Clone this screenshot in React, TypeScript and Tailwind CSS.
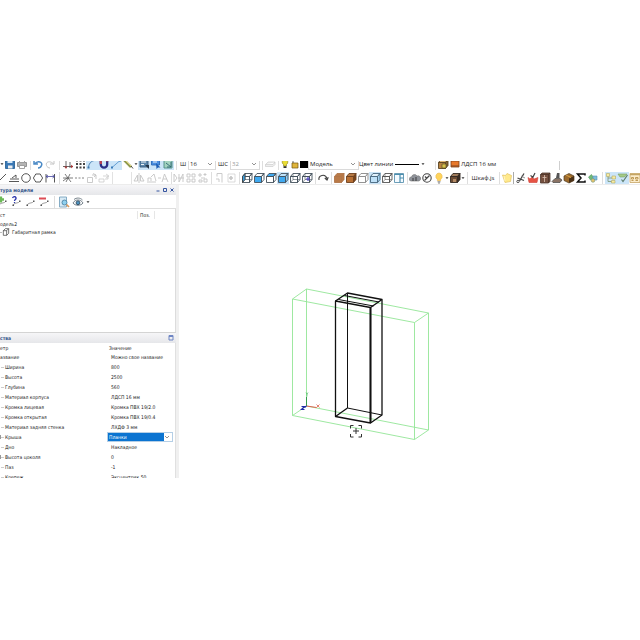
import React from "react";

type IconProps = { children: React.ReactNode; label: string; active?: boolean; muted?: boolean };

const Tool: React.FC<IconProps> = ({ children, label, active, muted }) => (
  <button
    type="button"
    aria-label={label}
    className={`flex h-3 w-3 shrink-0 items-center justify-center ${active ? "bg-[#cce5f8]" : ""} ${muted ? "opacity-30" : ""}`}
  >
    <svg viewBox="0 0 12 12" className="h-3 w-3" fill="none" stroke="#444" strokeWidth=".9">
      {children}
    </svg>
  </button>
);

const Sep = ({ wide }: { wide?: boolean }) => (
  <span className={`flex h-3 shrink-0 justify-center ${wide ? "w-1.5" : "w-1"}`}>
    <span className="h-full w-px bg-[#dedede]" />
  </span>
);

const Caret = () => (
  <svg viewBox="0 0 4 4" className="h-1 w-1 shrink-0" fill="#333">
    <path d="M.5 1.2h3L2 3z" />
  </svg>
);

type CubeProps = { front?: string; top?: string; side?: string; line?: string; through?: boolean };

// Small isometric box used by most of the view buttons
const Cube = ({ front = "none", top = "none", side = "none", line = "#44515c", through }: CubeProps) => (
  <g stroke={line} strokeWidth=".9" strokeLinejoin="round">
    <path d="M1.500 4.500 4 1.500h7L8.500 4.500z" fill={top} />
    <path d="M8.500 4.500 11 1.500v6L8.500 10.500z" fill={side} />
    <path d="M1.500 4.500h7v6h-7z" fill={front} />
    {through && <path d="M4 1.500v6h7M4 7.500l-2.500 3" strokeWidth=".6" />}
  </g>
);

const Chevron = () => (
  <svg viewBox="0 0 6 6" className="pointer-events-none absolute right-0.5 top-1/2 h-1.5 w-1.5 -translate-y-1/2" fill="none" stroke="#777" strokeWidth=".8">
    <path d="m1 2 2 2 2-2" />
  </svg>
);

type ComboProps = { id: string; value: string; className: string; muted?: boolean };

const Combo = ({ id, value, className, muted }: ComboProps) => (
  <span className={`relative block h-3 shrink-0 border border-[#dadada] bg-white ${className}`}>
    <select
      id={id}
      aria-label={id}
      defaultValue={value}
      className={`block h-full w-full appearance-none bg-transparent pl-px leading-[10px] outline-none ${muted ? "text-[#999]" : ""}`}
    >
      <option>{value}</option>
    </select>
    <Chevron />
  </span>
);

const MainToolbar = () => (
  <div className="-mt-1 flex h-3.5 items-center overflow-hidden whitespace-nowrap">
    <Caret />
    <Tool label="Сохранить">
      <path d="M1.500 1.500h9v9h-9z" fill="#3a78b5" stroke="#2b6599" />
      <path d="M3.500 1.500h5V5h-5z" fill="#d7e8f6" stroke="none" />
      <path d="M4 7.500h4.500v3H4z" fill="#eee" stroke="none" />
    </Tool>
    <Tool label="Печать">
      <path d="M1.500 4.500h9v4h-9z" fill="#b5b5b5" stroke="#8c8c8c" />
      <path d="M3.500 7.500h5v3h-5zM3.500 1.500h5v3h-5z" fill="#fff" stroke="#999" />
    </Tool>
    <Sep />
    <Tool label="Отменить">
      <path d="M2 2v4h4M2.500 6C6 2 11 4 9.500 7.500 9 9 7.500 10 6 10" stroke="#4b8ac6" strokeWidth="1.500" />
    </Tool>
    <Tool label="Вернуть" muted>
      <path d="M10 2v4H6M9.500 6C6 2 1 4 2.500 7.500 3 9 4.500 10 6 10" strokeWidth="1" />
    </Tool>
    <Sep wide />
    <Tool label="Оси">
      <path d="M4 1v9M1 8.500h10M8 4v6" strokeWidth=".8" />
      <path d="m2.500 8.500 1.500 2 1-2M9 7l2 1.500-2 1.500" fill="#a33" stroke="#a33" strokeWidth=".5" />
    </Tool>
    <Tool label="Сетка">
      <path d="M2 2.500h9M2 6h9M2 9.500h9" strokeWidth="2" strokeDasharray="2 1.500" />
    </Tool>
    <Tool label="Привязка к линии" active>
      <path d="M2.500 10c0-4 2-7 7.500-8" stroke="#3f78ad" />
      <path d="M1.500 8.500h2v2h-2zM9 1h2v2H9z" fill="#3f78ad" stroke="none" />
    </Tool>
    <Tool label="Магнит" active>
      <path d="M2.800 1v5.500a3.200 3.200 0 0 0 6.400 0V1" stroke="#2b2f86" strokeWidth="2.300" />
      <path d="M2.800 1v5M9.200 1v2.500" stroke="#b9404f" strokeWidth="2.300" />
    </Tool>
    <Tool label="Отрезок" active>
      <path d="m2 9.500 8-7" stroke="#5a97cf" />
      <path d="M1 8.500h2v2H1zM9 1.500h2v2H9z" fill="#3b7cba" stroke="none" />
    </Tool>
    <Tool label="Карандаш">
      <path d="m2 2 7 7" stroke="#8f9a50" strokeWidth="2.500" />
      <path d="m3 2 7 7" stroke="#eadb82" />
      <path d="m9 8 2 2.500" stroke="#333" />
    </Tool>
    <Caret />
    <Tool label="Вид слева" active>
      <path d="M2 2h8v7H2z" fill="#5b87ab" stroke="#33587a" />
      <path d="M3 4h5M3 6.500h3" stroke="#fff" />
      <path d="m7 7 4 4V7z" fill="#234" stroke="none" />
    </Tool>
    <Tool label="Вид сверху" active>
      <path d="M1.500 2h8v5h-8z" fill="#4a8fe0" stroke="#2c6ab8" />
      <path d="M3 4h4" stroke="#fff" />
      <path d="m6 5 4.500 4.500H8l-1.500 1.500z" fill="#1d5fb5" stroke="none" />
    </Tool>
    <Tool label="Вид справа" active>
      <path d="M2 2h8v8H2z" fill="#a3d3c0" stroke="#4a8a83" />
      <path d="m4 5 5 4M5 9h4V4" stroke="#2d6472" />
    </Tool>
    <Sep />
    <label htmlFor="width" className="w-2.5 shrink-0 text-center">Ш</label>
    <Combo id="width" value="16" className="w-7" />
    <label htmlFor="gap" className="w-3.5 shrink-0 text-center">ШС</label>
    <Combo id="gap" value="32" className="w-7.5" muted />
    <Sep />
    <Tool label="Слои" muted>
      <path d="M1.500 6.500 4 4h7L9 6.500zM1.500 6.500v2h7.500l2-2V4" fill="#ccc" strokeWidth=".6" />
    </Tool>
    <Sep />
    <svg viewBox="0 0 10 12" className="h-3 w-2.5 shrink-0">
      <path d="M5 1a3 3 0 0 0-1.500 5.500V8h3V6.500A3 3 0 0 0 5 1" fill="#e9dc34" stroke="#888026" strokeWidth=".6" />
      <path d="M3.500 8.200h3V10h-3z" fill="#333" />
    </svg>
    <svg viewBox="0 0 10 12" className="h-3 w-2.5 shrink-0">
      <path d="M3 5V3.500a1.800 1.800 0 0 1 3.600-.5" fill="none" stroke="#555" />
      <path d="M2 5h6v5H2z" fill="#e0b53c" stroke="#72560f" strokeWidth=".7" />
    </svg>
    <span className="h-2 w-2 shrink-0 bg-black" />
    <Combo id="model" value="Модель" className="w-[51px]" />
    <label htmlFor="line" className="w-[34px] shrink-0 text-center">Цвет линии</label>
    <button id="line" type="button" aria-label="Цвет линии" className="flex w-8 shrink-0 items-center gap-0.5">
      <span className="ml-0.5 h-px w-6 bg-black" />
      <Caret />
    </button>
    <span className="w-2" />
    <Sep />
    <Tool label="Материал">
      <Cube front="#b98443" top="#e2b877" side="#806133" line="#5a4524" />
      <path d="M5 6h4v4H5z" fill="#d9c24c" stroke="#4c4424" strokeWidth=".6" />
    </Tool>
    <svg viewBox="0 0 12 12" className="h-3 w-3 shrink-0">
      <path d="M2 3h8v6H2z" fill="#e8792c" stroke="#7e431d" strokeWidth=".8" />
      <path d="M2 8h8" stroke="#7e431d" />
    </svg>
    <span className="h-3 w-[99px] shrink-0 border-r border-[#cfcfcf] leading-3">ЛДСП 16 мм</span>
  </div>
);

const DrawToolbar = () => (
  <div className="-ml-1 flex h-3.5 items-center overflow-hidden border-b border-[#ececec] whitespace-nowrap">
    <Tool label="Линия"><path d="m2 10 8-8" /></Tool>
    <Tool label="Параллель"><path d="M1 9.500h10M2 7h9M4 6l4-3v3" /></Tool>
    <Tool label="Окружность"><circle cx="6" cy="6" r="4.300" /></Tool>
    <Tool label="Многоугольник"><path d="M3.800 2h4.400l2.400 4-2.400 4H3.800L1.400 6z" /></Tool>
    <Tool label="Размер"><path d="M2 2v8.500M10.500 2v8.500" /><path d="M2 4.500h8.500M4 3 2 4.500 4 6M8.500 3l2 1.500-2 1.500" stroke="#4848a0" strokeWidth=".8" /></Tool>
    <Sep wide />
    <Tool label="Обрезать"><path d="M1 6h10M3 2l6 8M8 2 4 10M1 9l4-3" strokeWidth=".7" /></Tool>
    <Tool label="Пунктир"><path d="M1 6h10" strokeDasharray="2 1.500" stroke="#777" /></Tool>
    <Tool label="Копировать" muted><path d="M1.500 5.500h5v5h-5zM6 3h4v4M7 1.500 10 3 8 5" /></Tool>
    <Tool label="Сдвиг" muted><path d="M1 7h5v3H1zM5 4h5v3H7M8 2l3 2-3 2" strokeWidth=".7" /></Tool>
    <span className="ml-0.5 h-3 w-5 shrink-0 border-x border-[#e2e2e2]" />
    <span className="w-px shrink-0" />
    <Tool label="Симметрия" muted><path d="M6 1v10M4.500 3 1 9h3.500zM7.500 3 11 9H7.500z" /></Tool>
    <Tool label="Поворот" muted><path d="M2 10h9M3 9V6h3v3M6 5l3-3 2 7" /></Tool>
    <Tool label="Текст" muted><path d="M1 6h3M5 10l2.500-8L11 10M6 7h4" /></Tool>
    <Sep />
    <Tool label="Зеркало" muted><path d="M1 2v8M1 2l3 4-3 4M6 2v8l4-8v8M5 6h6" /></Tool>
    <Tool label="Массив" muted><path d="M2 2h3v3H2zM7 2h3v3H7zM2 7h3v3H2zM7 7h3v3H7z" /></Tool>
    <Tool label="По кругу" muted><path d="M2 2h2v2H2zM8 1v3M6.500 2.500h3M2 8h3v2H2zM7 7h3v3H7zM4 6h4" /></Tool>
    <Sep />
    <Tool label="Деталь" muted><path d="M4 1.500h5v9M4 1.500v3M3 7h3v3" /></Tool>
    <Tool label="Сборка" muted><path d="M3 2h7v8H3z" strokeWidth=".6" /><path d="M4 6h4M6 4v4" strokeWidth="1.600" /></Tool>
    <Sep />
    <Tool label="Слева"><Cube through /><path d="M1.500 4.500 4 1.500v6l-2.500 3z" fill="#3aa0e0" /></Tool>
    <Tool label="Спереди"><Cube front="#3fa9f0" /></Tool>
    <Tool label="Сверху"><Cube top="#3fa9f0" /></Tool>
    <Tool label="Спереди с гранями" active><Cube front="#3fa9f0" side="#8fcdf5" top="#bfe2f9" /></Tool>
    <Tool label="Изометрия"><Cube through /></Tool>
    <Tool label="Произвольный вид"><Cube through /><path d="M7 5v4M5 7h4" stroke="#4b43c0" strokeWidth="1.200" /></Tool>
    <Sep />
    <Tool label="Вращать"><path d="M2 8C1 3.500 8 1 10 6.500M7.800 6l2.200 2 1.300-2.700" strokeWidth="1.100" /></Tool>
    <Sep />
    <Tool label="Текстура"><Cube front="#b97a48" top="#b97a48" side="#b97a48" line="#b0764a" /></Tool>
    <Tool label="Текстура с линиями"><Cube front="#b87034" top="#b87a45" side="#76431c" line="#6e4220" /></Tool>
    <Tool label="Без линий"><Cube front="#fff" top="#fff" side="#fff" line="#888" /></Tool>
    <Tool label="Скрытые линии" active><Cube front="#bfe1f8" top="#e2f2fc" side="#a5d3f1" line="#47667d" /></Tool>
    <Tool label="Каркас"><Cube through line="#555" /></Tool>
    <Tool label="Окна">
      <path d="M1.500 1.500h9v9h-9z" fill="#f4faff" stroke="#5b93b0" />
      <path d="M1.500 2.500h9M7 2v8.500M7 6h3.500" stroke="#4a8eae" strokeWidth="1.200" />
    </Tool>
    <Sep />
    <Tool label="Облако"><path d="M2 9a2 2 0 0 1 .5-4A3 3 0 0 1 8 4a2.600 2.600 0 0 1 2 5z" fill="#8f939b" stroke="#777" strokeWidth=".6" /><path d="M4 6v3M7 5v4" stroke="#333" /></Tool>
    <Tool label="Отключить"><circle cx="6" cy="6" r="4.200" strokeWidth="1.100" /><path d="m3.500 8.500 5-5M4 4.500l2 2" strokeWidth="1.200" /></Tool>
    <Tool label="Свет">
      <path d="M6 1a3.400 3.400 0 0 0-1.700 6.200V8.500h3.400V7.200A3.400 3.400 0 0 0 6 1" fill="#ffd45c" stroke="#e8b548" strokeWidth=".6" />
      <path d="M4.500 9.800h3M5 11h2" stroke="#777" />
    </Tool>
    <Caret />
    <Tool label="Фурнитура"><Cube front="#6b4b34" top="#a07c5c" side="#392b22" line="#332a22" /><path d="M4 7h3v3H4z" fill="#b38a65" stroke="none" /></Tool>
    <Caret />
    <Sep />
    <button type="button" className="w-7 shrink-0 text-center">Шкаф.js</button>
    <Sep />
    <Tool label="Скрипты">
      <path d="m1.500 3 3 .500L6 1.500l4.500 2-1 6L4 10.500z" fill="#ffe98c" stroke="#e2c25c" strokeWidth=".7" />
      <path d="m3 4 1 5" stroke="#fff6c8" />
    </Tool>
    <span className="h-3 w-0.5 shrink-0 border-l border-[#aaa]" />
    <Tool label="Раскрой"><path d="M9 1.500 4.500 9M2.500 6 9 8.500" strokeWidth="1.300" /><circle cx="3" cy="9.500" r="1.200" /><path d="M6 4l4 2" stroke="#888" /></Tool>
    <Tool label="Кромка"><path d="M1 5.500 3 7l2-2 2 2 4-1.500-1 5H2z" fill="#e65345" stroke="#cf4237" strokeWidth=".6" /><path d="m8 1-2.500 5M3.500 3.500l3 2" strokeWidth="1.200" /></Tool>
    <Tool label="Шкаф"><path d="M1.500 2.500 3 1h8v8.500L9.500 11h-8z" fill="#75503f" stroke="#4c372d" strokeWidth=".8" /><path d="M5.500 3v7M3.500 5.500h4" stroke="#d8c0b0" strokeWidth=".8" /><path d="M1.500 2.500h8V11M9.500 2.500 11 1" stroke="#3d2a20" strokeWidth=".6" /></Tool>
    <Tool label="Фреза"><path d="M6 1h2.500v5H5z" fill="#555" stroke="none" /><path d="M1 9.500 4 6.500h5l2 1.500-2 2.500H2z" fill="#8a7364" strokeWidth=".7" /></Tool>
    <Tool label="Упаковка"><path d="m1 4 5-2.500L11 4v4.500L6 11 1 8.500z" fill="#9c6a2c" stroke="#4d3a20" strokeWidth=".7" /><path d="m6 6.500 5-2.500v4.500L6 11z" fill="#4b3218" stroke="none" /><path d="m3 3 5 2.500" stroke="#e5aa45" /></Tool>
    <Tool label="Смета"><path d="M10 3.500V2H2.500L6 6l-3.500 4H10V8.500" stroke="#111" strokeWidth="1.500" /></Tool>
    <Tool label="Цены"><path d="m1.500 5 3-2.500 2 3-3 2.500z" fill="#72b975" stroke="#4f9460" strokeWidth=".6" /><path d="M6 4h4v4H6z" fill="#7fbedd" stroke="#5b92b5" strokeWidth=".6" /><circle cx="6" cy="8.500" r="1.800" fill="#e7c46b" stroke="#6a947a" strokeWidth=".6" /></Tool>
    <Sep wide />
    <Tool label="Структура" active><path d="M3 4v5.500h4M3 6h5" stroke="#7b9673" strokeWidth=".8" /><path d="M1.500 1.500h3v3h-3zM7 4h3.500v3H7zM6.500 8.500H10V11H6.500z" fill="#f7eca0" stroke="#b3a865" strokeWidth=".6" /></Tool>
    <Tool label="Свойства" active><path d="M1 2h9L7.500 5H3z" fill="#a4cb86" stroke="#7aa062" strokeWidth=".6" /><path d="m10.500 3-4.500 6.500-1.500-2" stroke="#5f7d6c" strokeWidth="1.200" /></Tool>
    <Tool label="Таблица"><path d="M1 1.500h10v9H1z" fill="#fbeccb" stroke="#c5a564" strokeWidth=".8" /><path d="M1 2.500h10" stroke="#c5a564" strokeWidth="1.500" /><path d="M2.500 5.500h2v1.500h-2zM6.500 5.500h2.500v1.500H6.500zM2.500 8.500h2M6.500 8.500H9" stroke="#b8924b" /></Tool>
  </div>
);

// One polyline with two knots, shared by the structure buttons
const Elbow = () => (
  <>
    <path d="M3 9.500 4.500 7.500l4-1 1.500-1.500" stroke="#888" strokeWidth=".8" />
    <path d="M2.500 8.500h1.500v1.500H2.500zM9 4.500h1.500V6H9z" fill="#555" stroke="none" />
  </>
);

const StructurePanel = () => (
  <section className="flex h-[147px] shrink-0 flex-col">
    <header className="flex h-2.5 shrink-0 items-center justify-between bg-linear-to-b from-[#f6f6f8] to-[#e6e7ea] pr-px text-[#34568b]">
      <h2 className="font-bold">тура модели</h2>
      <svg viewBox="0 0 20 6" className="h-1.5 w-5" fill="none" stroke="#3555a0" strokeWidth="1">
        <path d="M1.500 4h3M8.500 1.500h3v3h-3zM15.500 1.500l3 3M18.500 1.500l-3 3" />
      </svg>
    </header>
    <div className="-ml-1 flex h-3.5 shrink-0 items-center gap-0.5 border-b border-[#dedede]">
      <Tool label="Добавить"><path d="M2 3.500h6M5 .5v6" stroke="#6cb956" strokeWidth="2.300" /><Elbow /></Tool>
      <Tool label="Справка"><Elbow /><path d="M2.500 2C3.500 0 6.500.5 6 2.500c-.2 1-1.500 1-1.500 2.500M4.500 6v1" stroke="#2c36ac" strokeWidth="1.300" /></Tool>
      <Tool label="Связь"><Elbow /></Tool>
      <Tool label="Удалить"><path d="M1 2.500h7" stroke="#dc4c55" strokeWidth="2" /><Elbow /></Tool>
      <Sep />
      <Tool label="Просмотр">
        <path d="M1.500 1h7v10h-7z" fill="#d7eaf5" stroke="#7ba5bf" />
        <circle cx="6.500" cy="6.500" r="2.500" fill="#8fd0ee" stroke="#4e84a6" />
        <path d="m8.500 8.500 2.500 2.500" stroke="#d9995b" strokeWidth="1.700" />
      </Tool>
      <Tool label="Видимость">
        <path d="M1 7c2-4 8-4 10 0-2 3-8 3-10 0zM2 3.500c2.500-2 6-2 8.500.500" stroke="#66747e" />
        <circle cx="6" cy="6.800" r="1.900" fill="#4b91bd" stroke="#314c63" />
      </Tool>
      <Caret />
    </div>
    <div className="flex-1 border-r border-[#dcdcdc] pt-px">
      <div className="flex h-2.5 items-center">
        <span className="flex-1">ст</span>
        <span className="w-[18px] border-x border-[#e6e6e6] pl-0.5 leading-2">Поз.</span>
        <span className="w-5" />
      </div>
      <ul className="leading-2">
        <li>
          одель2
          <ul>
            <li className="flex items-center">
              <span className="w-0.5 border-t border-[#bbb]" />
              <svg viewBox="0 0 12 12" className="mr-0.5 h-2 w-2" fill="none" stroke="#333">
                <path d="M2 4h5v7H2zM2 4l3-3h5v7l-3 3M10 1 7 4" />
              </svg>
              Габаритная рамка
            </li>
          </ul>
        </li>
      </ul>
    </div>
  </section>
);

type Property = { name: string; value: string; expandable?: boolean; selected?: boolean };

const properties: Property[] = [
  { name: "Ширина", value: "800" },
  { name: "Высота", value: "2500" },
  { name: "Глубина", value: "560" },
  { name: "Материал корпуса", value: "ЛДСП 16 мм" },
  { name: "Кромка лицевая", value: "Кромка ПВХ 19/2.0" },
  { name: "Кромка открытая", value: "Кромка ПВХ 19/0.4" },
  { name: "Материал задняя стенка", value: "ЛХДФ 3 мм" },
  { name: "Крыша", value: "Планки", expandable: true, selected: true },
  { name: "Дно", value: "Накладное" },
  { name: "Высота цоколя", value: "0", expandable: true },
  { name: "Паз", value: "-1" },
  { name: "Крепеж", value: "Эксцентрик 50" },
];

const PropertiesPanel = () => (
  <section className="min-h-0 flex-1 overflow-hidden border-t border-[#d4d4d4]">
    <header className="flex h-2.5 items-center justify-between bg-linear-to-b from-[#f6f6f8] to-[#e6e7ea] pr-0.5 text-[#34568b]">
      <h2 className="font-bold">ства</h2>
      <svg viewBox="0 0 6 6" className="h-1.5 w-1.5" fill="none" stroke="#6f86c4">
        <path d="M1 1.500h4M1 .5v4.500h4V.5z" />
      </svg>
    </header>
    <table className="w-full table-fixed border-collapse border-r border-[#e0e0e0]">
      <thead>
        <tr className="h-[9px]">
          <th className="w-[107px] p-0 text-left font-normal">етр</th>
          <th className="p-0 pl-0.5 text-left font-normal">Значение</th>
        </tr>
      </thead>
      <tbody>
        <tr className="h-2.5">
          <td className="p-0">азвание</td>
          <td className="p-0 pl-1">Можно свое название</td>
        </tr>
        {properties.map((prop) => (
          <tr key={prop.name} className="h-2.5">
            <td className="p-0">
              <span className="flex items-center">
                <span className={prop.expandable ? "h-1 w-px bg-[#999]" : "w-px"} />
                <span className="mr-px w-[3px] border-t border-[#ccc]" />
                {prop.name}
              </span>
            </td>
            <td className={prop.selected ? "p-0" : "p-0 pl-1"}>
              {prop.selected ? (
                <span className="relative mr-0.5 block h-2.5 border border-[#b5cfe6] bg-white pr-2">
                  <select aria-label={prop.name} defaultValue={prop.value} className="block h-2 w-full appearance-none bg-[#0b74d1] pl-px leading-2 text-white outline-none">
                    <option>{prop.value}</option>
                  </select>
                  <Chevron />
                </span>
              ) : (
                prop.value
              )}
            </td>
          </tr>
        ))}
      </tbody>
    </table>
  </section>
);

// Overall frame in green, the cabinet itself in black
const Viewport = () => (
  <main className="min-w-0 flex-1 overflow-hidden pl-[101px] pt-[95px]">
    <svg viewBox="280 280 160 170" className="h-[170px] w-40" fill="none">
      <g stroke="#93e596" strokeWidth=".9">
        <path d="M306.500 289 428.500 313v117L306.500 406z" />
        <path d="M292.500 299 414.500 322.500v117L292.500 415.500z" />
        <path d="m306.500 289-14 10M428.500 313l-14 9.500M428.500 430l-14 9.500M306.500 406l-14 9.500" />
      </g>
      <g stroke="#111" strokeWidth="1" strokeLinejoin="round">
        <path d="M347.500 294v114l34.500 7" />
        <path d="M335.500 301v115.500l35 6.500V307.500z" strokeWidth="1.300" />
        <path d="M382 300v115l-11.500 8M335.500 416.500l12-8.500" strokeWidth="1.300" />
        <path d="M335.500 301l12-8 34.500 6.500-11.500 8" strokeWidth="1.400" />
        <path d="m338.500 299.500 35 6.500M344.500 295.500l34.500 6.500" />
        <path d="M370.500 307.500V423" strokeWidth="1.900" />
      </g>
      <path d="M306.500 406v-9" stroke="#329b4b" />
      <path d="m306 392.500 1 2 1-2M307 394.500v2" stroke="#56bd6b" strokeWidth=".7" />
      <path d="m306.500 406 10 1.500" stroke="#df6350" />
      <path d="m316.500 404.500 3 3M319.500 404.500l-3 3" stroke="#df6350" strokeWidth=".8" />
      <path d="m306.500 406-2 1.500M301.500 406.500h3l-3 3h3" stroke="#202ba8" strokeWidth="1.200" />
      <path d="M350.500 428.500v-3h3M358.500 425.500h3v3M361.500 434v3h-3M353.500 437h-3v-3M356 428v6M353 431h6" stroke="#333" />
    </svg>
  </main>
);

const App: React.FC = () => {
  return (
    <div className="flex h-screen flex-col bg-white pt-[161px] pb-[162px] font-['Open_Sans','Noto_Sans',sans-serif] text-[6px] leading-2 text-[#222]">
      <div className="flex min-h-0 flex-1 flex-col overflow-hidden">
        <MainToolbar />
        <DrawToolbar />
        <div className="flex min-h-0 flex-1">
          <aside className="flex w-44 shrink-0 flex-col overflow-hidden whitespace-nowrap font-['DejaVu_Sans_Condensed','DejaVu_Sans',sans-serif] text-[5px]">
            <StructurePanel />
            <PropertiesPanel />
          </aside>
          <div className="w-[3px] shrink-0 bg-[#f0f0f0]" />
          <Viewport />
        </div>
      </div>
    </div>
  );
};

export default App;
